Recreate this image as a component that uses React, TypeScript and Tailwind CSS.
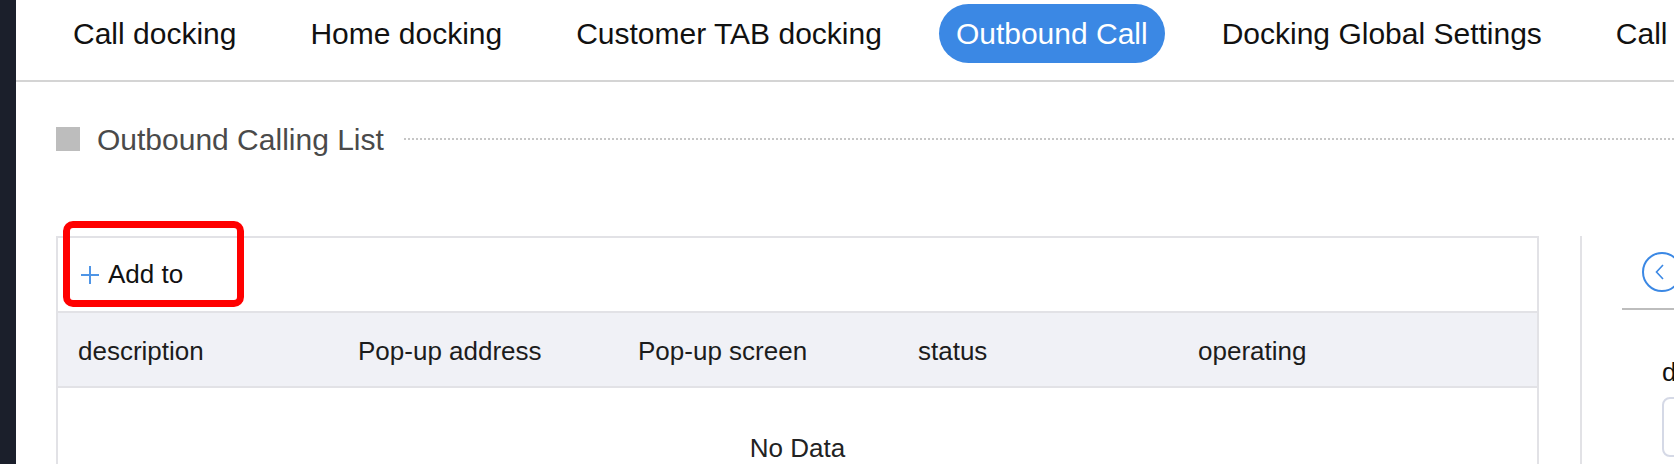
import React from 'react';

const TABS = ['Call docking', 'Home docking', 'Customer TAB docking', 'Outbound Call', 'Docking Global Settings', 'Call Recording'];
const ACTIVE = 'Outbound Call';

const COLUMNS = ['description', 'Pop-up address', 'Pop-up screen', 'status', 'operating'];

const App: React.FC = () => {
  return (
    <div className="flex h-[464px] w-[1674px] overflow-hidden bg-white font-['Liberation_Sans',Arial,sans-serif]">
      {/* Side strip */}
      <div className="w-[16px] shrink-0 bg-[#1b1f2b]" />

      <div className="flex-1 min-w-0 overflow-hidden">
        {/* Tab bar */}
        <div className="flex h-[82px] gap-[40px] whitespace-nowrap border-b-2 border-[#d4d4d4] pl-[40px] pt-[4px]">
          {TABS.map((tab) => (
            <div
              key={tab}
              className={`flex h-[59px] shrink-0 items-center rounded-full px-[17px] text-[30px] ${
                tab === ACTIVE ? 'bg-[#3b88e4] text-white' : 'text-[#111]'
              }`}
            >
              {tab}
            </div>
          ))}
        </div>

        <div className="pl-[40px]">
          {/* Section title */}
          <div className="mt-[42px] flex h-[30px] items-center">
            <div className="h-[24px] w-[24px] shrink-0 bg-[#bdbdbd]" />
            <span className="ml-[17px] whitespace-nowrap text-[30px] text-[#4a4a4a]">Outbound Calling List</span>
            <div className="ml-[20px] flex-1 border-t-2 border-dotted border-[#c6c6c6]" />
          </div>

          <div className="mt-[82px] flex">
            {/* Table */}
            <div className="relative w-[1483px] shrink-0 border-2 border-b-0 border-[#e2e2e6]">
              <div className="flex h-[73px] items-center pl-[22px]">
                <svg width="20" height="20" viewBox="0 0 20 20" className="shrink-0">
                  <path d="M10 1v18M1 10h18" stroke="#4f95e6" strokeWidth="2" />
                </svg>
                <span className="ml-[8px] text-[26px] text-[#111]">Add to</span>
              </div>
              <div className="flex h-[77px] items-center border-y-2 border-[#e2e2e6] bg-[#f0f1f6] pl-[20px] pt-[4px]">
                {COLUMNS.map((col) => (
                  <div key={col} className="w-[280px] shrink-0 text-[26px] text-[#1c1c1c]">
                    {col}
                  </div>
                ))}
              </div>
              <div className="pt-[41px] pb-[40px] text-center text-[26px] text-[#222]">No Data</div>

              {/* Annotation */}
              <div className="pointer-events-none absolute left-[5px] top-[-17px] h-[86px] w-[181px] rounded-[10px] border-[7px] border-[#ff0000]" />
            </div>

            {/* Right panel */}
            <div className="ml-[41px] w-[400px] shrink-0 border-l-2 border-[#e2e2e6] pl-[40px]">
              <div className="border-b-2 border-[#bdbdbd] pl-[20px] pt-[16px] pb-[16px]">
                <svg width="40" height="40" viewBox="0 0 40 40">
                  <circle cx="20" cy="20" r="19" fill="none" stroke="#3b88e4" strokeWidth="2" />
                  <path d="M21 13 L14.5 20 L21 27" fill="none" stroke="#3b88e4" strokeWidth="1.6" />
                </svg>
              </div>
              <div className="pl-[40px]">
                <div className="mt-[47px] text-[26px] leading-[30px] text-[#111]">description</div>
                <div className="mt-[10px] h-[60px] w-[300px] rounded-[8px] border-2 border-[#d5d9e6]" />
              </div>
            </div>
          </div>
        </div>
      </div>
    </div>
  );
};

export default App;
